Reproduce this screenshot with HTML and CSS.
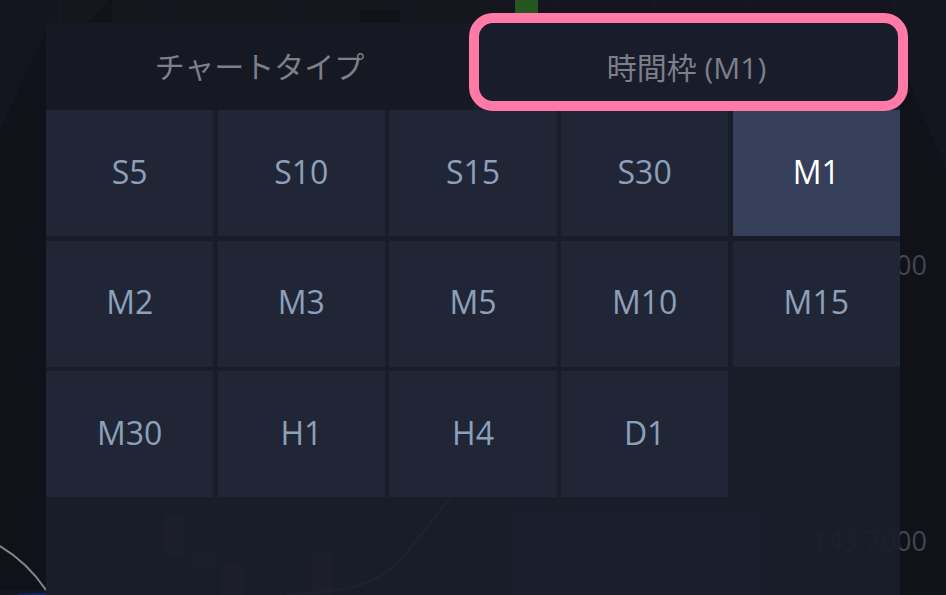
FILE: index.html
```html
<!DOCTYPE html>
<html lang="ja">
<head>
<meta charset="utf-8">
<title>時間枠</title>
<link rel="stylesheet" href="styles.css">
</head>
<body>
<div class="stage">
  <svg class="chart" width="946" height="595" viewBox="0 0 946 595" aria-hidden="true">
    <path class="strip" d="M60 0H175V23H60ZM177 0H290V23H177ZM292 0H405V23H292ZM407 0H515V23H407Z"/>
    <g class="grid">
      <path d="M60 0V23M176 0V23M291 0V23M406 0V23M555 0V23M655 0V23M750 0V23M895 0V23"/>
    </g>
    <rect class="candle-up" x="515" y="0" width="23" height="14"/>
    <path class="wick" d="M88 23L108 0H112V23ZM360 10H400V23H360Z"/>
    <path class="shade" d="M0 130L46 30V590H0Z"/>
    <path class="shade" d="M900 60L946 170V595H900Z"/>
    <path class="trend" d="M0 546C20 558 34 572 46 590"/>
    <path class="blue" d="M14 595Q28 592 46 593V595Z"/>
    <g class="ghost-candles">
      <rect x="165" y="514" width="20" height="42"/>
      <rect x="193" y="553" width="22" height="14"/>
      <rect x="222" y="565" width="22" height="30"/>
      <rect x="311" y="553" width="22" height="42"/>
    </g>
    <path class="ghost-line" d="M285 595C330 592 370 590 395 565C415 545 435 515 452 496"/>
  </svg>
  <span class="price price-top">143.8000</span>
  <span class="price price-bottom">143.7000</span>
  <main class="panel">
    <div class="tabs">
      <div class="tab">チャートタイプ</div>
      <div class="tab tab-current">時間枠 (M1)</div>
    </div>
    <div class="cells">
      <button class="cell">S5</button>
      <button class="cell">S10</button>
      <button class="cell">S15</button>
      <button class="cell">S30</button>
      <button class="cell cell-active">M1</button>
      <button class="cell">M2</button>
      <button class="cell">M3</button>
      <button class="cell">M5</button>
      <button class="cell">M10</button>
      <button class="cell">M15</button>
      <button class="cell">M30</button>
      <button class="cell">H1</button>
      <button class="cell">H4</button>
      <button class="cell">D1</button>
    </div>
  </main>
  <div class="callout"></div>
</div>
</body>
</html>
```
FILE: styles.css
```css
* { box-sizing: border-box; }
html, body { margin: 0; height: 100%; background: #14151e; }
.stage {
  position: relative;
  width: 946px;
  height: 595px;
  overflow: hidden;
  padding: 23px 46px 0;
  font-family: "Open Sans", "Noto Sans CJK JP", sans-serif;
}
.chart { position: absolute; left: 0; top: 0; }
.strip { fill: #15161e; }
.grid path { stroke: #1a1b25; stroke-width: 1; fill: none; }
.candle-up { fill: #27551f; }
.wick { fill: #12131a; }
.shade { fill: #111219; }
.trend { stroke: #85858b; stroke-width: 2; fill: none; }
.blue { fill: #14215e; }
.ghost-candles rect { fill: #48202c; }
.ghost-line { stroke: #5c6a80; stroke-width: 2; fill: none; }
.price {
  position: absolute;
  right: 19px;
  font-size: 27px;
  line-height: 30px;
  color: #44454e;
}
.price-top { top: 250px; }
.price-bottom { top: 526px; }
.panel {
  position: relative;
  width: 854px;
  height: 572px;
  display: flex;
  flex-direction: column;
  background: rgba(26, 30, 44, 0.94);
}
.tabs { display: flex; height: 87px; }
.tab {
  flex: 1;
  display: flex;
  align-items: center;
  justify-content: center;
  font-size: 30px;
  color: #7d7f89;
  background: #161923;
  padding-bottom: 4px;
  font-family: "Noto Sans CJK JP", "Open Sans", sans-serif;
}
.tab-current {
  background: #191c2b;
  padding: 0 0 1px;
  font-family: "Open Sans", "Noto Sans CJK JP", sans-serif;
}
.cells {
  display: grid;
  grid-template-columns: repeat(5, 1fr);
  grid-auto-rows: 126px;
  column-gap: 4.25px;
  row-gap: 4.5px;
}
.cell {
  border: 0;
  padding: 0 0 4px;
  background: #212637;
  color: #8ca0ba;
  font: inherit;
  font-size: 32px;
}
.cell-active { background: #363f5a; color: #fff; }
.callout {
  position: absolute;
  left: 469px;
  top: 13px;
  width: 439px;
  height: 98px;
  border: 10px solid #ff7aa6;
  border-radius: 24px;
}
```
